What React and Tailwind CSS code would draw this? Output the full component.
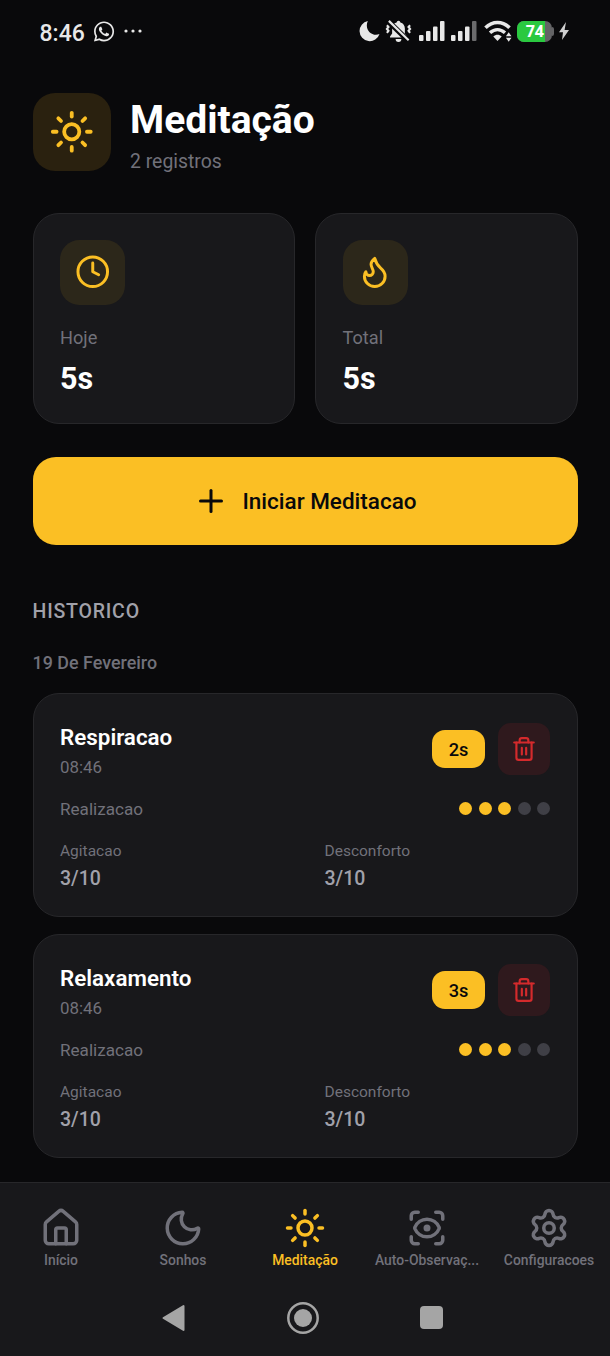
import { useState } from "react";
import { Clock, Flame, House, Moon, Plus, ScanEye, Settings, Sun, Trash2 } from "lucide-react";
import { FaWhatsapp } from "react-icons/fa";

const stats = [
  { label: "Hoje", value: "5s", icon: Clock },
  { label: "Total", value: "5s", icon: Flame },
];

const sessions = [
  { id: 1, name: "Respiracao", time: "08:46", duration: "2s", rating: 3, agitation: 3, discomfort: 3 },
  { id: 2, name: "Relaxamento", time: "08:46", duration: "3s", rating: 3, agitation: 3, discomfort: 3 },
];

const tabs = [
  { id: "home", label: "Início", icon: House },
  { id: "dreams", label: "Sonhos", icon: Moon },
  { id: "meditation", label: "Meditação", icon: Sun },
  { id: "observation", label: "Auto-Observaç...", icon: ScanEye },
  { id: "settings", label: "Configuracoes", icon: Settings },
];

const StatusBar = () => (
  <div className="flex h-[62px] shrink-0 items-center justify-between pl-[39.5px] pr-[41px] text-[#e8e8e8]">
    <div className="flex items-center">
      <span className="w-[46px] pt-[4px] text-[23px] font-medium leading-none">8:46</span>
      <FaWhatsapp className="ml-[7px] mt-px h-[23px] w-[22px]" />
      <svg className="ml-[9px] h-1 w-[18px]" viewBox="0 0 18 4" fill="currentColor">
        <circle cx="2" cy="2" r="1.6" />
        <circle cx="9" cy="2" r="1.6" />
        <circle cx="16" cy="2" r="1.6" />
      </svg>
    </div>

    <div className="flex items-center">
      <svg className="h-[22px] w-[21px]" viewBox="0 0 21 22" fill="currentColor">
        <path d="M8.8 1A10.2 10.2 0 1 0 20.5 14C13 17.2 5 9.5 8.8 1Z" />
      </svg>

      {/* Muted bell */}
      <svg className="ml-[5px] h-6 w-[27px]" viewBox="0 0 28 24" fill="none" stroke="currentColor">
        <path d="M14 1.5a2 2 0 0 1 2 1.7c3 .8 4.6 3.2 4.6 6.2v5.2l2.2 3v1.2H5.2v-1.2l2.2-3V9.4c0-3 1.6-5.4 4.6-6.2a2 2 0 0 1 2-1.7Z" fill="currentColor" stroke="none" />
        <path d="M11 20.3h6a3 3 0 0 1-6 0Z" fill="currentColor" stroke="none" />
        <path d="M3 1.5 24 22" stroke="#09090b" strokeWidth="5.5" />
        <path d="M4 1.5 24.5 21.5" strokeWidth="2.2" />
        <path d="m2 6 1.6 1.8L2 9.8l1.6 2L2 14M26 6l-1.6 1.8L26 9.8l-1.6 2L26 14" strokeWidth="2.2" />
      </svg>

      <svg className="ml-[7px] h-5 w-[26px]" viewBox="0 0 26 20" fill="currentColor">
        <rect x="0" y="14" width="4.5" height="6" rx="1" />
        <rect x="7" y="10" width="4.5" height="10" rx="1" />
        <rect x="14" y="5.5" width="4.5" height="14.5" rx="1" />
        <rect x="21" y="0" width="4.5" height="20" rx="1" />
      </svg>
      <svg className="ml-[6px] h-5 w-[26px]" viewBox="0 0 26 20" fill="currentColor">
        <rect x="0" y="14" width="4.5" height="6" rx="1" />
        <rect x="7" y="10" width="4.5" height="10" rx="1" />
        <rect x="14" y="5.5" width="4.5" height="14.5" rx="1" />
        <rect x="21" y="0" width="4.5" height="20" rx="1" fill="#6b6b6d" />
      </svg>

      <svg className="ml-[7px] h-[22px] w-7" viewBox="0 0 28 22" fill="none" stroke="currentColor">
        <path d="M1.5 7.8C8.5.8 18.5.8 25.5 7.8" strokeWidth="3.6" />
        <path d="M6 12.8c4.6-4.2 10.4-4.2 15 0" strokeWidth="3.4" />
        <path d="M9.3 16.6c2.6-2.5 5.8-2.5 8.4 0L13.5 21Z" fill="currentColor" stroke="none" />
        <path d="m24.700 12.300 2.800 3.900h-5.600ZM24.700 21.700l2.800-3.900h-5.600Z" fill="currentColor" stroke="none" />
      </svg>

      {/* Battery */}
      <div className="ml-[5px] flex items-center">
        <div className="flex h-[21px] w-[35px] overflow-hidden rounded-[7px] bg-[#636365]">
          <div className="flex w-[28px] items-center justify-end bg-[#2ac940] pr-px font-['Open_Sans'] text-[16px] font-bold leading-none text-white">
            74
          </div>
        </div>
        <div className="h-[9px] w-0.5 rounded-r-full bg-[#636365]" />
      </div>
      <svg className="ml-[5px] h-[18px] w-[10px] text-[#d0d0d0]" viewBox="0 0 10 18" fill="currentColor">
        <path d="M7 0 0 10.2h4L3 18l7-10H5.6Z" />
      </svg>
    </div>
  </div>
);

const StatCard = ({ label, value, icon: Icon }) => (
  <div className="h-[211px] flex-1 rounded-[26px] border border-[#27272a] bg-[#18181b] px-[26.5px] pt-[26px]">
    <div className="flex h-[65px] w-[65px] items-center justify-center rounded-[19.5px] bg-[#2c271a] text-[#fbbf24]">
      <Icon size={35.5} />
    </div>
    <p className="mt-5 text-[18.2px] leading-[26px] text-[#71717a]">{label}</p>
    <p className="mt-[8px] text-[30.5px] font-bold leading-10 text-white">{value}</p>
  </div>
);

const SessionCard = ({ session, onDelete }) => (
  <div className="h-[224px] rounded-[26px] border border-[#27272a] bg-[#18181b] px-[26.5px] pt-[26px]">
    <div className="flex h-[59px] items-center justify-between">
      <div className="pt-0.5">
        <h3 className="text-[22.4px] font-semibold leading-[33px] text-white">{session.name}</h3>
        <p className="text-[16.9px] leading-[26px] text-[#71717a]">{session.time}</p>
      </div>
      <div className="flex items-center gap-[13px]">
        <span className="flex h-[38px] w-[53px] items-center justify-center rounded-[13px] bg-[#fbbf24] pt-0.5 text-[18.2px] font-medium text-[#09090b]">
          {session.duration}
        </span>
        <button
          onClick={() => onDelete(session.id)}
          className="flex h-[52px] w-[52px] items-center justify-center rounded-[13px] bg-[#2f191d] text-[#d42a2c]"
        >
          <Trash2 size={26} />
        </button>
      </div>
    </div>

    <div className="mt-[17px] flex h-[25px] items-center justify-between">
      <span className="pt-[3px] text-[17.1px] text-[#71717a]">Realizacao</span>
      <div className="flex gap-[6.5px]">
        {[1, 2, 3, 4, 5].map((n) => (
          <span
            key={n}
            className={`h-[13px] w-[13px] rounded-full ${n <= session.rating ? "bg-[#fbbf24]" : "bg-[#3f3f46]"}`}
          />
        ))}
      </div>
    </div>

    <div className="mt-[19px] grid grid-cols-2 gap-[39px]">
      <div>
        <p className="text-[15.5px] leading-[23px] text-[#71717a]">Agitacao</p>
        <p className="mt-0.5 text-[19.5px] font-medium leading-[27px] text-[#a1a1aa]">{session.agitation}/10</p>
      </div>
      <div>
        <p className="text-[15.5px] leading-[23px] text-[#71717a]">Desconforto</p>
        <p className="mt-0.5 text-[19.5px] font-medium leading-[27px] text-[#a1a1aa]">{session.discomfort}/10</p>
      </div>
    </div>
  </div>
);

const App = () => {
  const [activeTab, setActiveTab] = useState("meditation");
  const [history, setHistory] = useState(sessions);

  const handleDelete = (id) => {
    setHistory(history.filter((s) => s.id !== id));
  };

  return (
    <div className="flex h-[1356px] w-[610px] flex-col overflow-hidden bg-[#09090b] font-[Roboto,sans-serif]">
      <StatusBar />

      <main className="flex-1 px-[32.5px] pt-[31px]">
        <header className="flex h-[78px] items-center gap-[19.5px]">
          <div className="flex h-[78px] w-[78px] items-center justify-center rounded-[22px] bg-[#2a210f] text-[#fbbf24]">
            <Sun size={45.5} />
          </div>
          <div className="pt-[7px]">
            <h1 className="text-[39px] font-bold leading-[52px] text-white">Meditação</h1>
            <p className="text-[19.4px] leading-[31px] text-[#71717a]">2 registros</p>
          </div>
        </header>

        <div className="mt-[41.5px] flex gap-5">
          {stats.map((stat) => (
            <StatCard key={stat.label} {...stat} />
          ))}
        </div>

        <button className="mt-[33px] flex h-[88px] w-full items-center justify-center gap-[13px] rounded-[23px] bg-[#fbbf24] text-[22.5px] font-medium text-[#09090b]">
          <Plus size={36} />
          <span className="pt-[3px]">Iniciar Meditacao</span>
        </button>

        <h2 className="mt-[53px] text-[19.5px] font-medium leading-7 tracking-[0.8px] text-[#a1a1aa]">HISTORICO</h2>
        <p className="mt-[23px] text-[17.9px] font-medium leading-7 text-[#71717a]">19 De Fevereiro</p>

        <div className="mt-[16px] flex flex-col gap-[17px]">
          {history.map((session) => (
            <SessionCard key={session.id} session={session} onDelete={handleDelete} />
          ))}
        </div>
      </main>

      {/* Bottom tabs */}
      <nav className="grid h-[98px] shrink-0 grid-cols-5 border-t border-[#27272a] bg-[#18181b] pt-[23.5px]">
        {tabs.map(({ id, label, icon: Icon }) => (
          <button
            key={id}
            onClick={() => setActiveTab(id)}
            className={`flex flex-col items-center ${activeTab === id ? "text-[#fbbf24]" : "text-[#71717a]"}`}
          >
            <Icon size={42} />
            <span className="mt-[2px] whitespace-nowrap text-[13.9px] font-medium leading-[18px]">{label}</span>
          </button>
        ))}
      </nav>

      {/* System navigation */}
      <div className="flex h-[76px] shrink-0 items-center justify-between bg-[#18181b] pb-px pl-[161px] pr-[167px] text-[#a5a5a5]">
        <svg className="h-7 w-6" viewBox="0 0 24 28" fill="currentColor" stroke="currentColor" strokeWidth="2" strokeLinejoin="round">
          <path d="M2.5 14 22.5 2v24Z" />
        </svg>
        <svg className="h-8 w-8" viewBox="0 0 32 32">
          <circle cx="16" cy="16" r="14.7" fill="none" stroke="currentColor" strokeWidth="2.5" />
          <circle cx="16" cy="16" r="9" fill="currentColor" />
        </svg>
        <div className="h-[23px] w-[23px] rounded bg-[#a5a5a5]" />
      </div>
    </div>
  );
};

export default App;
